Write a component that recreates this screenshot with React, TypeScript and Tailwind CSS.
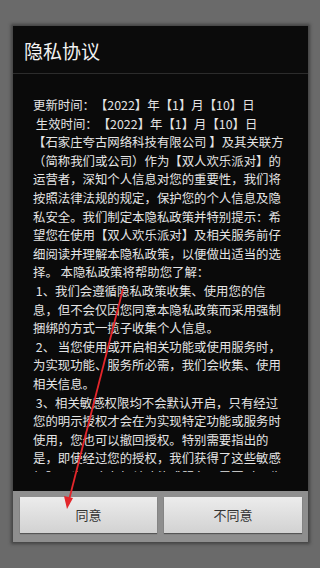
const lines = [
  '更新时间：【2022】年【1】月【10】日',
  ' 生效时间：【2022】年【1】月【10】日',
  '【石家庄夸古网络科技有限公司 】及其关联方',
  '（简称我们或公司）作为【双人欢乐派对】的',
  '运营者，深知个人信息对您的重要性，我们将',
  '按照法律法规的规定，保护您的个人信息及隐',
  '私安全。我们制定本隐私政策并特别提示：希',
  '望您在使用【双人欢乐派对】及相关服务前仔',
  '细阅读并理解本隐私政策，以便做出适当的选',
  '择。 本隐私政策将帮助您了解：',
  ' 1、我们会遵循隐私政策收集、使用您的信',
  '息，但不会仅因您同意本隐私政策而采用强制',
  '捆绑的方式一揽子收集个人信息。',
  ' 2、 当您使用或开启相关功能或使用服务时，',
  '为实现功能、服务所必需，我们会收集、使用',
  '相关信息。',
  ' 3、相关敏感权限均不会默认开启，只有经过',
  '您的明示授权才会在为实现特定功能或服务时',
  '使用，您也可以撤回授权。特别需要指出的',
  '是，即使经过您的授权，我们获得了这些敏感',
  '权限，也不会在相关功能或服务不需要时而收',
];

export default function App() {
  return (
    <div className="relative min-h-[568px] bg-[#6a6a6a] px-[13px] pt-[26px] font-['Noto_Sans_CJK_SC','Roboto',sans-serif] [text-spacing-trim:space-all]">
      <div className="flex w-[295px] flex-col shadow-[0_0_3px_2px_rgba(40,40,40,0.6)]">
        {/* Title */}
        <div className="flex h-[48px] items-center border-b border-[#2c2c2c] bg-[#0b0b0b] px-[11px] pt-[4px] text-[19px] text-[#f2f2f2]">
          隐私协议
        </div>

        {/* Body */}
        <div className="h-[417px] bg-[#0a0a0a] pl-[20px] pr-[8px] pt-[22px]">
          <div className="h-[376px] overflow-hidden text-[12.4px] leading-[18.6px] text-[#e4e4e4]">
            {lines.map((l, i) => (
              <div key={i} className="whitespace-pre">
                {l}
              </div>
            ))}
          </div>
        </div>

        {/* Buttons */}
        <div className="flex gap-[7px] bg-[#8e8e8e] pb-[9px] pl-[7px] pr-[6px] pt-[6px]">
          <button className="h-[36px] w-[137px] bg-gradient-to-b from-[#ececec] to-[#d2d2d2] text-[13px] text-[#333] shadow-[0_1px_1px_rgba(0,0,0,0.4)]">
            同意
          </button>
          <button className="h-[36px] w-[138px] bg-gradient-to-b from-[#ececec] to-[#d2d2d2] text-[13px] text-[#333] shadow-[0_1px_1px_rgba(0,0,0,0.4)]">
            不同意
          </button>
        </div>
      </div>

      {/* red annotation arrow */}
      <svg className="pointer-events-none absolute left-0 top-0" width="320" height="568" viewBox="0 0 320 568">
        <line x1="123" y1="289" x2="69" y2="500" stroke="#e3262b" strokeWidth="1.8" />
        <polygon points="67,509 64,496 73,498" fill="#e3262b" />
      </svg>
    </div>
  );
}
